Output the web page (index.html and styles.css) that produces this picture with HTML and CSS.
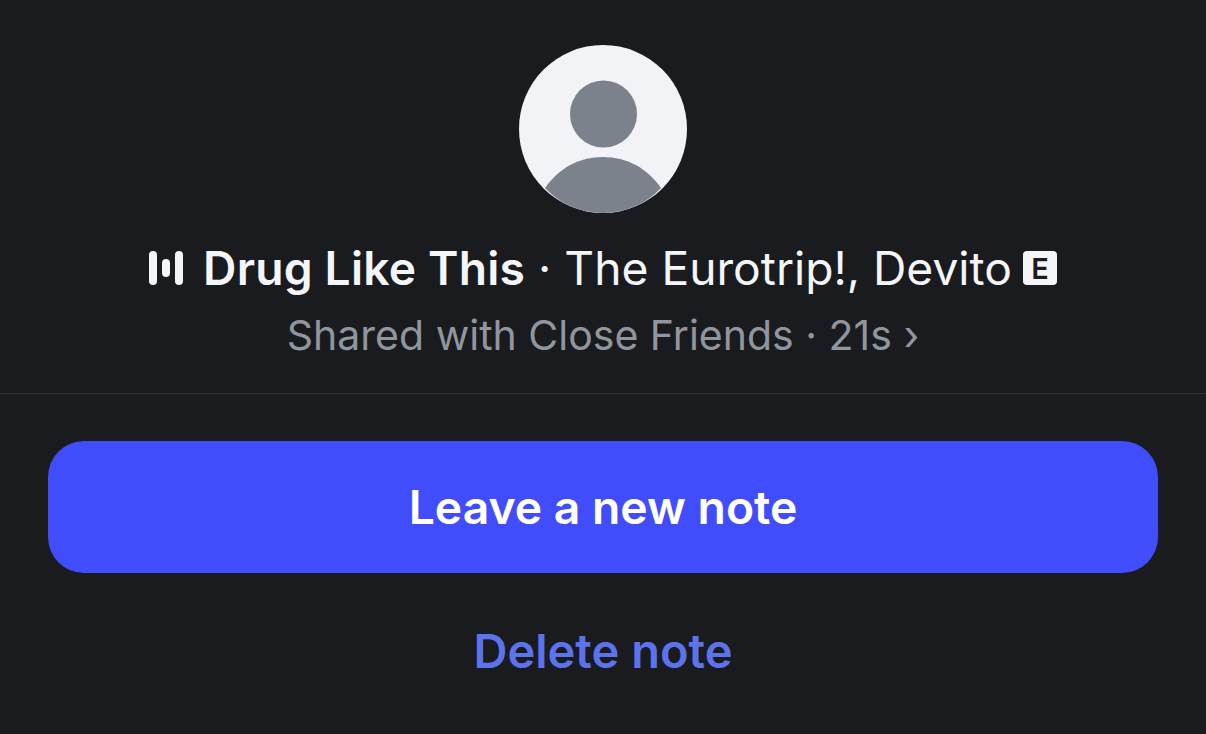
FILE: index.html
```html
<!DOCTYPE html>
<html lang="en">
<head>
    <meta charset="UTF-8">
    <meta name="viewport" content="width=device-width, initial-scale=1.0">
    <title>Note</title>
    <link rel="stylesheet" href="styles.css">
</head>
<body>
    <div class="head">
        <svg class="avatar" width="168" height="168" viewBox="0 0 168 168">
            <circle cx="84" cy="84" r="84" fill="#f1f3f6"/>
            <circle cx="84.5" cy="69" r="33.5" fill="#7b828c"/>
            <path d="M26 143 C40 123 60 112 84 112 C108 112 128 123 142 143 C127 159 106 168 84 168 C62 168 41 159 26 143 Z" fill="#7b828c"/>
        </svg>
        <div class="song">
            <svg class="bars" width="34" height="34" viewBox="0 0 34 34">
                <rect x="0" y="0" width="8" height="34" rx="4" fill="#f4f5f6"/>
                <rect x="13" y="8" width="8" height="18" rx="4" fill="#f4f5f6"/>
                <rect x="26" y="0" width="8" height="34" rx="4" fill="#f4f5f6"/>
            </svg>
            <b>Drug Like This</b><span class="dot">·</span><span>The Eurotrip!, Devito</span>
            <span class="explicit">E</span>
        </div>
        <div class="shared">Shared with Close Friends · 21s ›</div>
    </div>
    <div class="actions">
        <button class="newnote">Leave a new note</button>
        <button class="deletenote">Delete note</button>
    </div>
</body>
</html>
```

FILE: styles.css
```css
body {
    margin: 0;
    height: 734px;
    overflow: hidden;
    background: #1a1b1f;
    font-family: Inter, "Liberation Sans", sans-serif;
    color: #f4f5f6;
}
.head {
    display: flex;
    flex-direction: column;
    align-items: center;
    height: 394px;
    padding-top: 45px;
    box-sizing: border-box;
    border-bottom: 1px solid #2e3034;
}
.avatar {
    display: block;
}
.song {
    display: flex;
    align-items: center;
    margin-top: 26px;
    height: 58px;
    font-size: 46.2px;
    white-space: nowrap;
}
.song b {
    font-weight: 600;
    letter-spacing: 0.2px;
}
.bars {
    margin-right: 20px;
}
.dot {
    margin: 0 13px;
}
.explicit {
    display: flex;
    align-items: center;
    justify-content: center;
    width: 34px;
    height: 34px;
    margin-left: 11px;
    border-radius: 4px;
    background: #f4f5f6;
    color: #1a1b1f;
    font-size: 29px;
    font-weight: 600;
}
.shared {
    margin-top: 13px;
    font-size: 41px;
    color: #90969e;
    white-space: nowrap;
}
.actions {
    display: flex;
    flex-direction: column;
    align-items: center;
    padding: 47px 48px 0;
}
.newnote {
    width: 100%;
    height: 132px;
    border: none;
    border-radius: 36px;
    background: #414dfa;
    color: #fff;
    font-family: inherit;
    font-size: 46.3px;
    font-weight: 600;
}
.deletenote {
    margin-top: 49px;
    padding: 0;
    border: none;
    background: none;
    color: #5c73ec;
    font-family: inherit;
    font-size: 47px;
    font-weight: 600;
}
```
